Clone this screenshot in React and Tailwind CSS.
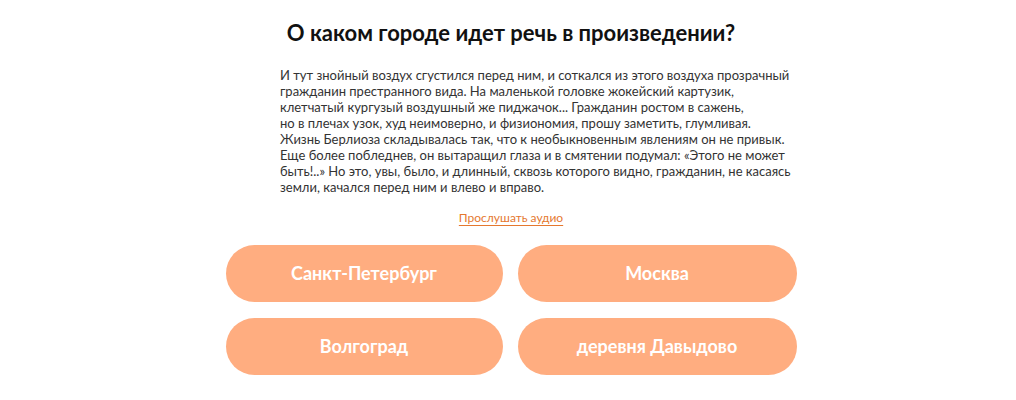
export default function App() {
  const answers = ['Санкт-Петербург', 'Москва', 'Волгоград', 'деревня Давыдово'];
  const lines = [
    'И тут знойный воздух сгустился перед ним, и соткался из этого воздуха прозрачный',
    'гражданин престранного вида. На маленькой головке жокейский картузик,',
    'клетчатый кургузый воздушный же пиджачок... Гражданин ростом в сажень,',
    'но в плечах узок, худ неимоверно, и физиономия, прошу заметить, глумливая.',
    'Жизнь Берлиоза складывалась так, что к необыкновенным явлениям он не привык.',
    'Еще более побледнев, он вытаращил глаза и в смятении подумал: «Этого не может',
    'быть!..» Но это, увы, было, и длинный, сквозь которого видно, гражданин, не касаясь',
    'земли, качался перед ним и влево и вправо.',
  ];

  return (
    <div className="w-[1016px] h-[400px] bg-white font-['Lato','Liberation_Sans',sans-serif] pl-[6px]">
      <div className="flex flex-col items-center pt-[19px]">
        <h1 className="text-[22px] leading-[28px] font-bold text-[#111]">
          О каком городе идет речь в произведении?
        </h1>
        <p className="mt-[20px] w-[462px] text-[13px] leading-[16px] text-[#333]">
          {lines.map((l, i) => (
            <span key={i} className="block whitespace-nowrap">{l}</span>
          ))}
        </p>
        <a href="#" className="mt-[15px] text-[12px] leading-[16px] text-[#e5782f] underline underline-offset-[3px]">
          Прослушать аудио
        </a>
        <div className="mt-[19px] grid grid-cols-[277px_279px] gap-x-[15px] gap-y-[16px]">
          {answers.map((a) => (
            <button
              key={a}
              className="h-[57px] rounded-full bg-[#ffad80] text-white text-[18px] font-bold"
            >
              {a}
            </button>
          ))}
        </div>
      </div>
    </div>
  );
}
